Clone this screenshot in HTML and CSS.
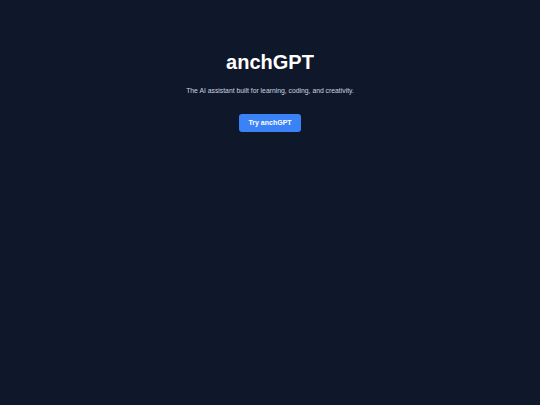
FILE: index.html
```html
<!DOCTYPE html>
<html lang="en">
<head>
<meta charset="utf-8">
<title>anchGPT</title>
<link rel="stylesheet" href="styles.css">
</head>
<body>
<main class="hero">
  <h1 class="hero-title">anchGPT</h1>
  <p class="hero-subtitle">The AI assistant built for learning, coding, and creativity.</p>
  <a class="hero-button" href="#">Try anchGPT</a>
</main>
</body>
</html>
```

FILE: styles.css
```css
html, body {
  margin: 0;
  padding: 0;
  height: 100%;
}
body {
  background: #0f172a;
  color: #ffffff;
  font-family: "Liberation Sans", Arial, sans-serif;
}
.hero {
  display: flex;
  flex-direction: column;
  align-items: center;
  padding-top: 52px;
}
.hero-title {
  margin: 0;
  font-size: 20px;
  line-height: 20px;
  font-weight: 700;
  color: #ffffff;
}
.hero-subtitle {
  margin: 14px 0 0;
  font-size: 6.8px;
  line-height: 10px;
  color: #cbd5e1;
}
.hero-button {
  margin-top: 18px;
  display: inline-block;
  background: #3b82f6;
  color: #ffffff;
  font-size: 7px;
  line-height: 8px;
  font-weight: 700;
  padding: 5px 9.5px;
  border-radius: 3px;
  text-decoration: none;
}
```
